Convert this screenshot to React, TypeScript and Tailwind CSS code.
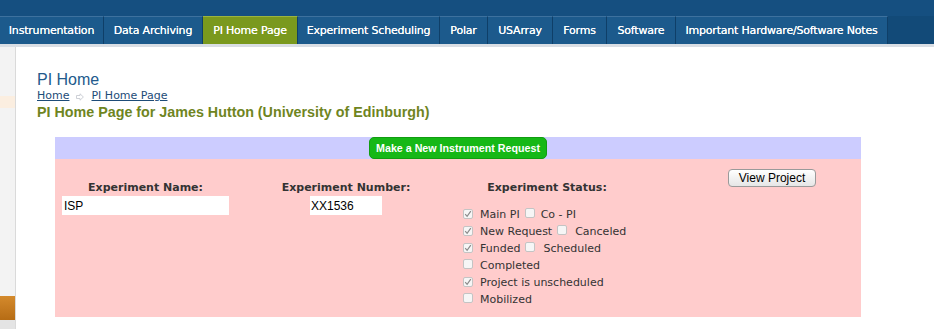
import React from 'react';

const tabs = [
  { label: 'Instrumentation', cls: 'w-[104px]' },
  { label: 'Data Archiving', cls: 'w-[99px]' },
  { label: 'PI Home Page', cls: 'w-[95px]', active: true },
  { label: 'Experiment Scheduling', cls: 'w-[142px]' },
  { label: 'Polar', cls: 'w-[48px]' },
  { label: 'USArray', cls: 'w-[65px]' },
  { label: 'Forms', cls: 'w-[54px]' },
  { label: 'Software', cls: 'w-[69px]' },
  { label: 'Important Hardware/Software Notes', cls: 'w-[212px]' },
];

function Box({ checked }: { checked?: boolean }) {
  return (
    <span className="inline-flex w-[10px] h-[10px] shrink-0 items-center justify-center rounded-[2px] border border-[#c4c4c4] bg-[#f6f6f6]">
      {checked && (
        <svg width="8" height="8" viewBox="0 0 8 8">
          <path d="M1.2 4.2 L3.1 6.3 L6.8 1.2" fill="none" stroke="#8a8a8a" strokeWidth="1.2" />
        </svg>
      )}
    </span>
  );
}

function StatusRow({ items }: { items: { label: string; checked?: boolean; gap?: string }[] }) {
  return (
    <div className="flex items-center h-[17px]">
      {items.map((it, i) => (
        <React.Fragment key={i}>
          <span className={i === 0 ? '' : 'ml-[5px]'}>
            <Box checked={it.checked} />
          </span>
          <span className={it.gap ?? 'ml-[7px]'}>{it.label}</span>
        </React.Fragment>
      ))}
    </div>
  );
}

export default function App() {
  return (
    <div className="w-[934px] h-[329px] overflow-hidden bg-white font-['DejaVu_Sans',Verdana,sans-serif]">
      {/* top navigation */}
      <div className="bg-[#154f80]">
        <div className="h-[16px]" />
        <div className="flex h-[28px] bg-[#124a78]">
          {tabs.map(t => (
            <div
              key={t.label}
              className={`${t.cls} flex items-center justify-center pt-[2px] border-r border-[#0f3f68] border-t text-[11px] text-white whitespace-nowrap tracking-[-0.2px] [text-shadow:0_0_0.4px_#fff] ${
                t.active ? 'bg-[#7a991e] border-t-[#9bb53f]' : 'bg-[#1c5a8c] border-t-[#3d719e]'
              }`}
            >
              {t.label}
            </div>
          ))}
        </div>
        <div className="h-[3px] bg-[#d9dee4]" />
      </div>

      <div className="flex h-[282px]">
        {/* left sidebar stub */}
        <div className="w-[16px] shrink-0 flex flex-col border-r border-[#dadada] bg-[#f3f3f3]">
          <div className="h-[49px]" />
          <div className="h-[12px] bg-[#fbeee0]" />
          <div className="flex-1" />
          <div className="h-[24px] bg-gradient-to-b from-[#d48a2c] to-[#b66c14]" />
          <div className="h-[9px] bg-[#e4e4e4]" />
        </div>

        <div className="flex-1 pl-[21px] pt-[24px]">
          <h1 className="text-[16px] leading-[18px] text-[#225a8c] font-['Liberation_Sans',Arial,sans-serif]">PI Home</h1>
          <div className="flex items-center h-[15px] text-[11px] text-[#1d4c78]">
            <span className="underline">Home</span>
            <svg className="mx-[7px]" width="8" height="8" viewBox="0 0 8 8">
              <path d="M0.5 2.5 H4 V0.8 L7.4 4 L4 7.2 V5.5 H0.5 Z" fill="none" stroke="#c8ccd2" strokeWidth="0.9" />
            </svg>
            <span className="underline">PI Home Page</span>
          </div>
          <h2 className="text-[14.3px] leading-[17px] font-bold text-[#6f851f] font-['Liberation_Sans',Arial,sans-serif]">
            PI Home Page for James Hutton (University of Edinburgh)
          </h2>

          {/* request panel */}
          <div className="mt-[16px] ml-[18px] w-[806px]">
            <div className="h-[22px] bg-[#ccccff] flex justify-center">
              <button className="w-[178px] h-[22px] rounded-[5px] bg-[#16b816] border border-[#119d11] text-white font-bold text-[10.7px] font-['Liberation_Sans',Arial,sans-serif]">
                Make a New Instrument Request
              </button>
            </div>
            <div className="h-[158px] bg-[#ffcccc] flex items-start pl-[7px] text-[11px] text-[#333]">
              <div className="w-[167px] pt-[22px]">
                <div className="text-center font-bold leading-[14px]">Experiment Name:</div>
                <div className="mt-[1px] h-[19px] bg-white pl-[2px] flex items-center text-[12px] text-black font-['Liberation_Sans',Arial,sans-serif]">ISP</div>
              </div>
              <div className="w-[234px] pt-[22px] flex flex-col items-center">
                <div className="font-bold leading-[14px] whitespace-nowrap">Experiment Number:</div>
                <div className="mt-[1px] w-[72px] h-[19px] bg-white pl-[1px] flex items-center text-[12px] text-black font-['Liberation_Sans',Arial,sans-serif]">XX1536</div>
              </div>
              <div className="w-[168px] pt-[22px]">
                <div className="text-center font-bold leading-[14px]">Experiment Status:</div>
                <div className="mt-[12px] whitespace-nowrap">
                  <StatusRow items={[{ label: 'Main PI', checked: true }, { label: 'Co - PI', gap: 'ml-[6px]' }]} />
                  <StatusRow items={[{ label: 'New Request', checked: true }, { label: 'Canceled', gap: 'ml-[8px]' }]} />
                  <StatusRow items={[{ label: 'Funded', checked: true }, { label: 'Scheduled', gap: 'ml-[8px]' }]} />
                  <StatusRow items={[{ label: 'Completed' }]} />
                  <StatusRow items={[{ label: 'Project is unscheduled', checked: true }]} />
                  <StatusRow items={[{ label: 'Mobilized' }]} />
                </div>
              </div>
              <div className="pt-[10px] pl-[97px]">
                <button className="w-[88px] h-[18px] rounded-[4px] border border-[#9a9a9a] bg-gradient-to-b from-white to-[#e6e6e6] text-[12px] leading-none text-black font-['Liberation_Sans',Arial,sans-serif]">
                  View Project
                </button>
              </div>
            </div>
          </div>
        </div>
      </div>
    </div>
  );
}
